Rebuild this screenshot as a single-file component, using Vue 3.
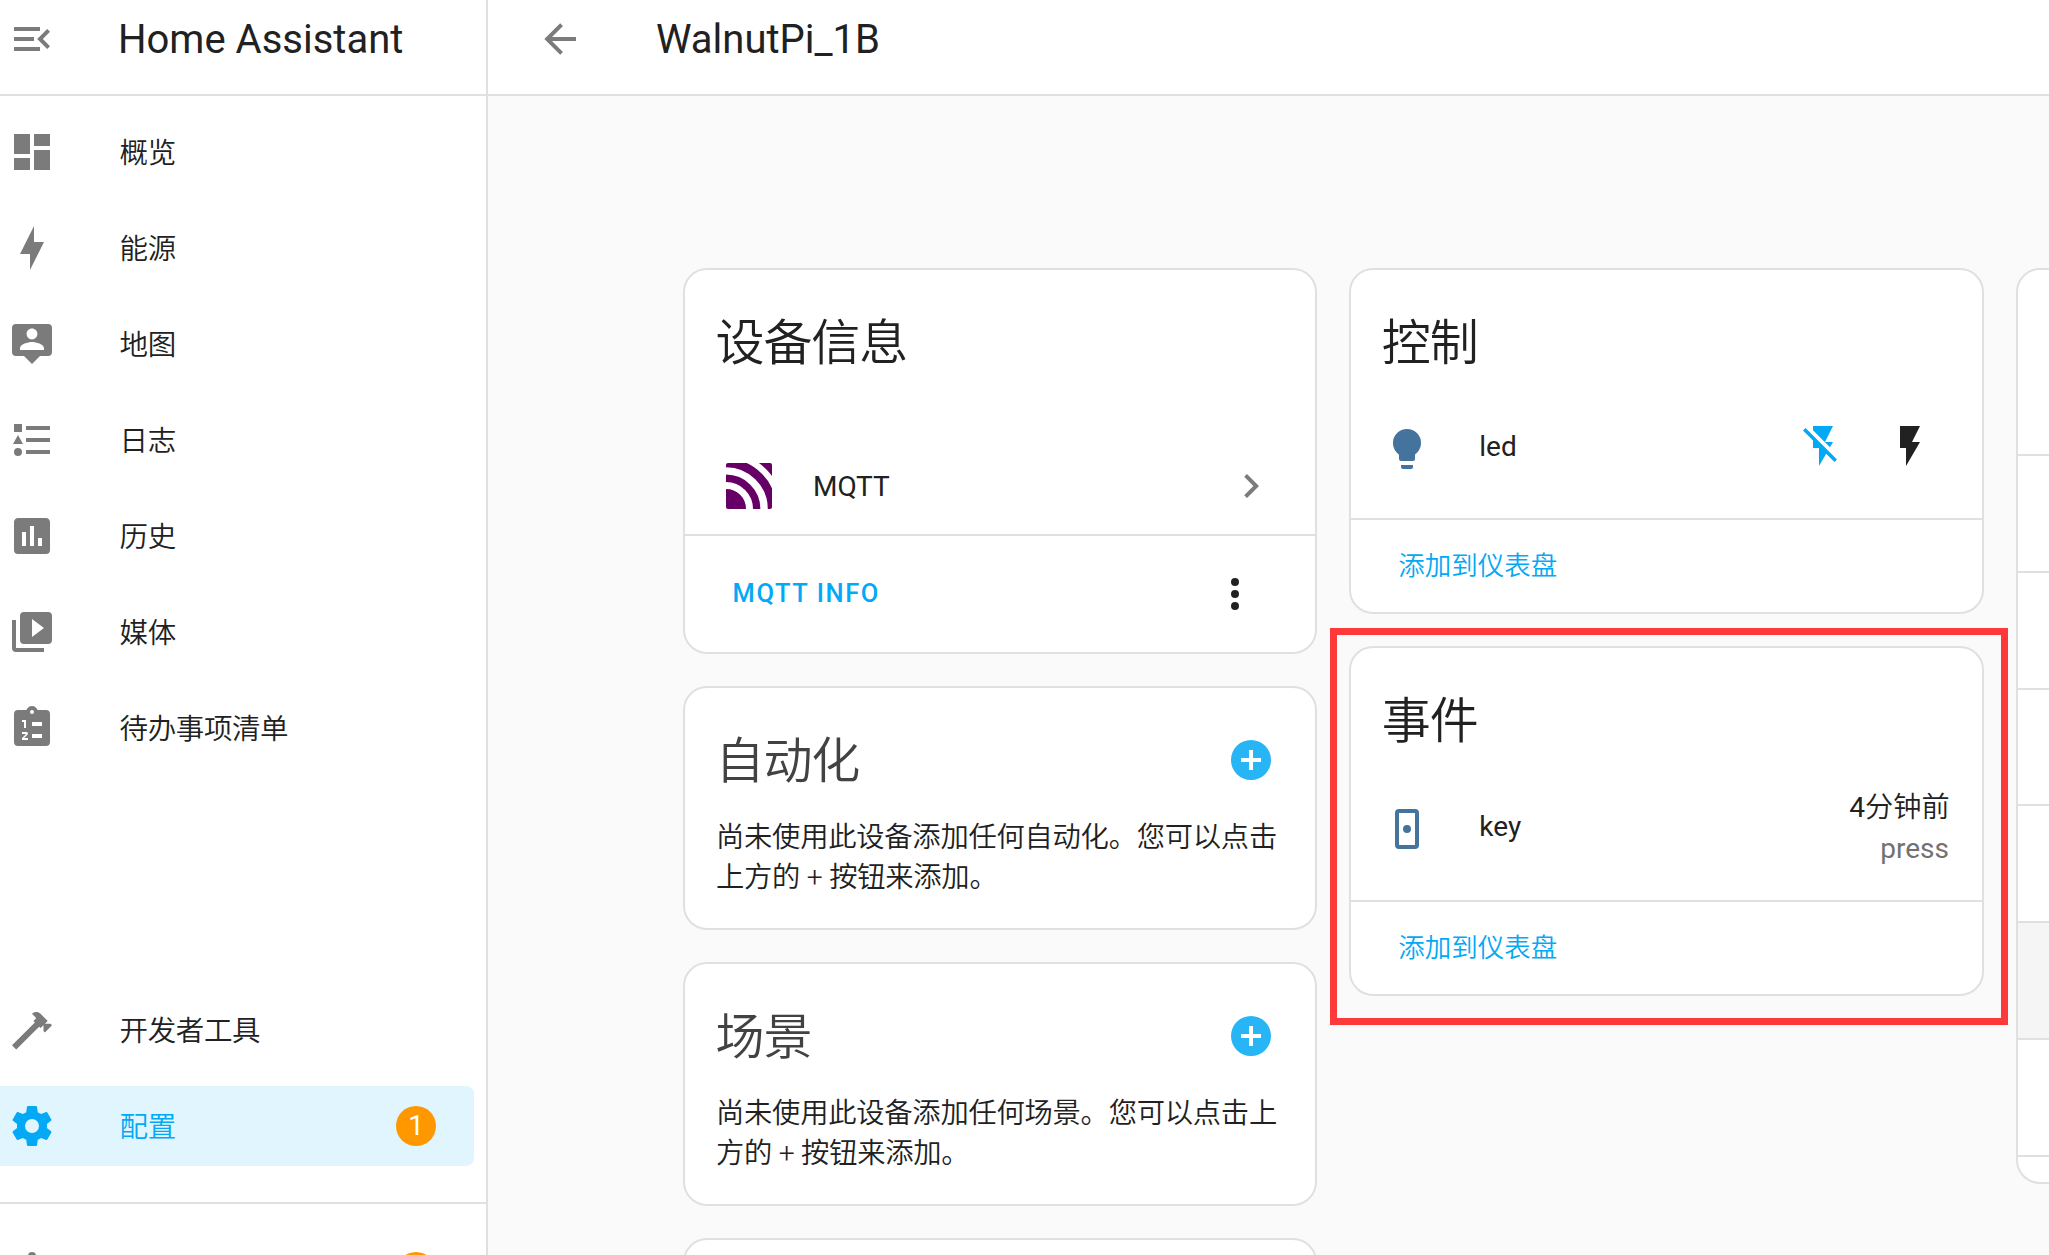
<script setup>
const icons = {
  menuOpen: 'M21,15.61L19.59,17L14.58,12L19.59,7L21,8.39L17.44,12L21,15.61M3,6H16V8H3V6M3,13V11H13V13H3M3,18V16H16V18H3Z',
  dashboard: 'M13,3V9H21V3M13,21H21V11H13M3,21H11V15H3M3,13H11V3H3V13Z',
  bolt: 'M11 15H6L13 1V9H18L11 23V15Z',
  map: 'M20,2H4A2,2 0 0,0 2,4V16A2,2 0 0,0 4,18H8L12,22L16,18H20A2,2 0 0,0 22,16V4A2,2 0 0,0 20,2M12,4.3C13.5,4.3 14.7,5.5 14.7,7C14.7,8.5 13.5,9.7 12,9.7C10.5,9.7 9.3,8.5 9.3,7C9.3,5.5 10.5,4.3 12,4.3M18,15H6V14.1C6,12.1 10,11 12,11C14,11 18,12.1 18,14.1V15Z',
  logbook: 'M5,9.5L7.5,14H2.5L5,9.5M3,4H7V8H3V4M5,20A2,2 0 0,0 7,18A2,2 0 0,0 5,16A2,2 0 0,0 3,18A2,2 0 0,0 5,20M9,5V7H21V5H9M9,19H21V17H9V19M9,13H21V11H9V13Z',
  history: 'M17,17H15V13H17M13,17H11V7H13M9,17H7V10H9M19,3H5C3.89,3 3,3.89 3,5V19A2,2 0 0,0 5,21H19A2,2 0 0,0 21,19V5C21,3.89 20.1,3 19,3Z',
  media: 'M4,6H2V20A2,2 0 0,0 4,22H18V20H4V6M20,2H8A2,2 0 0,0 6,4V16A2,2 0 0,0 8,18H20A2,2 0 0,0 22,16V4A2,2 0 0,0 20,2M12,14.5V5.5L18,10L12,14.5Z',
  todo: 'M19,3H14.82C14.4,1.84 13.3,1 12,1C10.7,1 9.6,1.84 9.18,3H5A2,2 0 0,0 3,5V19A2,2 0 0,0 5,21H19A2,2 0 0,0 21,19V5A2,2 0 0,0 19,3M12,3A1,1 0 0,1 13,4A1,1 0 0,1 12,5A1,1 0 0,1 11,4A1,1 0 0,1 12,3M7,8H9V12H8V9H7V8M10,17V18H7V17.08L9,15H7V14H9.25A0.75,0.75 0 0,1 10,14.75C10,14.95 9.92,15.14 9.79,15.27L8.12,17H10M17,17H12V15H17V17M17,11H12V9H17V11Z',
  hammer: 'M2,19.63L13.43,8.2L12.72,7.5L14.14,6.07L12,3.89C13.2,2.7 15.09,2.7 16.27,3.89L19.87,7.5L18.45,8.91H21.29L22,9.62L18.45,13.21L17.74,12.5V9.62L16.27,11.04L15.56,10.33L4.13,21.76L2,19.63Z',
  cog: 'M12,15.5A3.5,3.5 0 0,1 8.5,12A3.5,3.5 0 0,1 12,8.5A3.5,3.5 0 0,1 15.5,12A3.5,3.5 0 0,1 12,15.5M19.43,12.97C19.47,12.65 19.5,12.33 19.5,12C19.5,11.67 19.47,11.34 19.43,11L21.54,9.37C21.73,9.22 21.78,8.95 21.66,8.73L19.66,5.27C19.54,5.05 19.27,4.96 19.05,5.05L16.56,6.05C16.04,5.66 15.5,5.32 14.87,5.07L14.5,2.42C14.46,2.18 14.25,2 14,2H10C9.75,2 9.54,2.18 9.5,2.42L9.13,5.07C8.5,5.32 7.96,5.66 7.44,6.05L4.95,5.05C4.73,4.96 4.46,5.05 4.34,5.27L2.34,8.73C2.21,8.95 2.27,9.22 2.46,9.37L4.57,11C4.53,11.34 4.5,11.67 4.5,12C4.5,12.33 4.53,12.65 4.57,12.97L2.46,14.63C2.27,14.78 2.21,15.05 2.34,15.27L4.34,18.73C4.46,18.95 4.73,19.03 4.95,18.95L7.44,17.94C7.96,18.34 8.5,18.68 9.13,18.93L9.5,21.58C9.54,21.82 9.75,22 10,22H14C14.25,22 14.46,21.82 14.5,21.58L14.87,18.93C15.5,18.67 16.04,18.34 16.56,17.94L19.05,18.95C19.27,19.03 19.54,18.95 19.66,18.73L21.66,15.27C21.78,15.05 21.73,14.78 21.54,14.63L19.43,12.97Z',
  bell: 'M21,19V20H3V19L5,17V11C5,7.9 7.03,5.17 10,4.29V4A2,2 0 0,1 12,2A2,2 0 0,1 14,4V4.29C16.97,5.17 19,7.9 19,11V17L21,19M14,21A2,2 0 0,1 12,23A2,2 0 0,1 10,21',
  arrow: 'M20,11V13H8L13.5,18.5L12.08,19.92L4.16,12L12.08,4.08L13.5,5.5L8,11H20Z',
  chevron: 'M8.59,16.58L13.17,12L8.59,7.41L10,6L16,12L10,18L8.59,16.58Z',
  dots: 'M12,16A2,2 0 0,1 14,18A2,2 0 0,1 12,20A2,2 0 0,1 10,18A2,2 0 0,1 12,16M12,10A2,2 0 0,1 14,12A2,2 0 0,1 12,14A2,2 0 0,1 10,12A2,2 0 0,1 12,10M12,4A2,2 0 0,1 14,6A2,2 0 0,1 12,8A2,2 0 0,1 10,6A2,2 0 0,1 12,4Z',
  plus: 'M17,13H13V17H11V13H7V11H11V7H13V11H17M12,2A10,10 0 0,0 2,12A10,10 0 0,0 12,22A10,10 0 0,0 22,12A10,10 0 0,0 12,2Z',
  bulb: 'M12,2A7,7 0 0,0 5,9C5,11.38 6.19,13.47 8,14.74V17A1,1 0 0,0 9,18H15A1,1 0 0,0 16,17V14.74C17.81,13.47 19,11.38 19,9A7,7 0 0,0 12,2M9,21A1,1 0 0,0 10,22H14A1,1 0 0,0 15,21V20H9V21Z',
  flashOff: 'M17,10H13L17,2H7V4.18L15.46,12.64M3.27,3L2,4.27L7,9.27V13H10V22L13.58,15.86L17.73,20L19,18.73L3.27,3Z',
  flash: 'M7,2V13H10V22L17,10H13L17,2H7Z',
  button: 'M16,2H8A2,2 0 0,0 6,4V20A2,2 0 0,0 8,22H16A2,2 0 0,0 18,20V4A2,2 0 0,0 16,2M16,20H8V4H16V20M12,10A2,2 0 0,0 10,12A2,2 0 0,0 12,14A2,2 0 0,0 14,12A2,2 0 0,0 12,10Z',
}
const nav = [
  ['dashboard', '概览'],
  ['bolt', '能源'],
  ['map', '地图'],
  ['logbook', '日志'],
  ['history', '历史'],
  ['media', '媒体'],
  ['todo', '待办事项清单'],
]
const hints = [
  { title: '自动化', text: '尚未使用此设备添加任何自动化。您可以点击上方的 + 按钮来添加。' },
  { title: '场景', text: '尚未使用此设备添加任何场景。您可以点击上方的 + 按钮来添加。' },
]
</script>

<template>
  <div class="app">
    <aside class="sidebar">
      <div class="brand">
        <svg class="icon" viewBox="0 0 24 24"><path :d="icons.menuOpen" /></svg>
        <span class="title">Home Assistant</span>
      </div>
      <nav class="nav">
        <a v-for="[icon, label] in nav" :key="icon" class="item">
          <svg class="icon" viewBox="0 0 24 24"><path :d="icons[icon]" /></svg>
          <span class="label">{{ label }}</span>
        </a>
        <div class="spacer"></div>
        <a class="item">
          <svg class="icon" viewBox="0 0 24 24"><path :d="icons.hammer" /></svg>
          <span class="label">开发者工具</span>
        </a>
        <a class="item active">
          <svg class="icon" viewBox="0 0 24 24"><path :d="icons.cog" /></svg>
          <span class="label">配置</span>
          <b class="badge">1</b>
        </a>
      </nav>
      <div class="notice">
        <a class="item">
          <svg class="icon" viewBox="0 0 24 24"><path :d="icons.bell" /></svg>
          <b class="badge"></b>
        </a>
      </div>
    </aside>

    <main class="main">
      <header class="toolbar">
        <svg class="icon" viewBox="0 0 24 24"><path :d="icons.arrow" /></svg>
        <span class="title">WalnutPi_1B</span>
      </header>

      <div class="columns">
        <div class="column">
          <section class="card">
            <h1>设备信息</h1>
            <div class="integration">
              <svg class="mqtt" viewBox="0 0 46 46">
                <defs><clipPath id="logo"><rect width="46" height="46" rx="2" /></clipPath></defs>
                <g clip-path="url(#logo)">
                  <rect width="46" height="46" fill="#660066" />
                  <g fill="none" stroke="#fff">
                    <circle cx="0" cy="46" r="23.5" stroke-width="7" />
                    <circle cx="0" cy="46" r="38.1" stroke-width="7.4" />
                    <circle cx="0" cy="46" r="53.4" stroke-width="6.2" />
                  </g>
                </g>
              </svg>
              <span class="grow latin">MQTT</span>
              <svg class="icon" viewBox="0 0 24 24"><path :d="icons.chevron" /></svg>
            </div>
            <footer class="tall">
              <span class="action caps">MQTT INFO</span>
              <svg class="icon dark" viewBox="0 0 24 24"><path :d="icons.dots" /></svg>
            </footer>
          </section>

          <section v-for="h in hints" :key="h.title" class="card">
            <div class="hint-head">
              <h1>{{ h.title }}</h1>
              <svg class="icon add" viewBox="0 0 24 24"><path :d="icons.plus" /></svg>
            </div>
            <p>{{ h.text }}</p>
          </section>
          <section class="card stub"></section>
        </div>

        <div class="column">
          <section class="card">
            <h1>控制</h1>
            <div class="entity">
              <svg class="icon state" viewBox="0 0 24 24"><path :d="icons.bulb" /></svg>
              <span class="grow latin name">led</span>
              <svg class="icon off" viewBox="0 0 24 24"><path :d="icons.flashOff" /></svg>
              <svg class="icon on" viewBox="0 0 24 24"><path :d="icons.flash" /></svg>
            </div>
            <footer><span class="action">添加到仪表盘</span></footer>
          </section>

          <section class="card marked">
            <h1>事件</h1>
            <div class="entity event">
              <svg class="icon state" viewBox="0 0 24 24"><path :d="icons.button" /></svg>
              <span class="grow latin name">key</span>
              <div class="value">
                <div class="ago"><span class="latin">4</span>分钟前</div>
                <div class="latin muted">press</div>
              </div>
            </div>
            <footer><span class="action">添加到仪表盘</span></footer>
            <div class="frame"></div>
          </section>
        </div>

        <div class="column">
          <section class="card log">
            <div class="log-head"></div>
            <div v-for="n in 6" :key="n" class="log-row" :class="{ shaded: n === 5 }"></div>
          </section>
        </div>
      </div>
    </main>
  </div>
</template>

<style>
body {
  overflow: hidden;
}
</style>

<style scoped>
.app {
  display: flex;
  width: 2049px;
  height: 1255px;
  overflow: hidden;
  background: #fafafa;
  color: #212121;
  font-family: Roboto, "Noto Sans CJK SC", sans-serif;
  font-size: 28px;
  font-weight: 350;
}
.icon {
  width: 48px;
  height: 48px;
  flex: none;
  fill: #7b7b7b;
  display: block;
}
.latin {
  font-weight: 400;
}
.title {
  font-size: 40px;
  font-weight: 400;
  line-height: 48px;
  white-space: nowrap;
}
.sidebar {
  box-sizing: border-box;
  width: 488px;
  flex: none;
  display: flex;
  flex-direction: column;
  background: #fff;
  border-right: 2px solid #e0e0e0;
}
.brand {
  box-sizing: border-box;
  height: 96px;
  flex: none;
  display: flex;
  align-items: flex-start;
  gap: 62px;
  padding: 15px 0 0 8px;
  border-bottom: 2px solid #e0e0e0;
}
.brand .title {
  margin-top: 1px;
}
.nav {
  box-sizing: border-box;
  height: 1106px;
  flex: none;
  display: flex;
  flex-direction: column;
  gap: 16px;
  padding: 16px 12px 36px 0;
}
.item {
  box-sizing: border-box;
  height: 80px;
  flex: none;
  display: flex;
  align-items: center;
  gap: 63px;
  padding: 0 38px 0 8px;
  border-radius: 0 8px 8px 0;
}
.label {
  font-size: 28.5px;
  letter-spacing: -0.4px;
  padding: 0 0 4px 0.6px;
}
.spacer {
  flex: 1;
}
.active {
  background: #e0f5fe;
  color: #03a9f4;
}
.active .icon {
  fill: #03a9f4;
}
.badge {
  width: 40px;
  height: 40px;
  margin-left: auto;
  border-radius: 50%;
  background: #ff9800;
  color: #fff;
  font-weight: 400;
  line-height: 40px;
  text-align: center;
}
.notice {
  flex: 1;
  border-top: 2px solid #e0e0e0;
  padding: 28px 12px 0 0;
}
.main {
  flex: 1;
  min-width: 0;
  display: flex;
  flex-direction: column;
}
.toolbar {
  box-sizing: border-box;
  height: 96px;
  flex: none;
  display: flex;
  align-items: flex-start;
  gap: 72px;
  padding: 15px 0 0 48px;
  background: #fff;
  border-bottom: 2px solid #e0e0e0;
}
.toolbar .title {
  margin-top: 1px;
}
.columns {
  display: flex;
  align-items: flex-start;
  gap: 32px;
  padding: 172px 0 0 195px;
}
.column {
  width: 634.3px;
  flex: none;
  display: flex;
  flex-direction: column;
  gap: 32px;
}
.card {
  box-sizing: border-box;
  background: #fff;
  border: 2px solid #e0e0e0;
  border-radius: 24px;
  position: relative;
}
h1 {
  box-sizing: border-box;
  height: 120px;
  margin: 0;
  padding: 26px 30.5px 0;
  font-size: 49px;
  font-weight: 350;
  letter-spacing: -1.1px;
  line-height: 96px;
}
.integration {
  height: 96px;
  display: flex;
  align-items: center;
  padding: 48px 40px 0 41px;
}
.mqtt {
  width: 46px;
  height: 46px;
  margin-right: 41px;
}
.grow {
  flex: 1;
}
footer {
  box-sizing: border-box;
  height: 94px;
  display: flex;
  align-items: center;
  justify-content: space-between;
  padding: 0 56px 0 47px;
  border-top: 2px solid #e0e0e0;
}
.tall {
  height: 118px;
}
.action {
  color: #03a9f4;
  font-size: 26.5px;
  padding-bottom: 5px;
}
.caps {
  font-weight: 500;
  font-size: 25.5px;
  letter-spacing: 1.55px;
  padding: 0 0 2px 0.6px;
}
.dark {
  fill: #212121;
}
.hint-head {
  height: 128px;
  display: flex;
  align-items: flex-start;
  justify-content: space-between;
  padding-right: 40px;
}
.hint-head h1 {
  color: #424242;
}
.add {
  margin-top: 48px;
  fill: #28b5f5;
}
p {
  margin: 0;
  padding: 2px 29px 30px 31px;
  font-size: 28.3px;
  letter-spacing: -0.25px;
  line-height: 40px;
}
.stub {
  height: 200px;
}
.entity {
  height: 128px;
  display: flex;
  align-items: flex-start;
  padding: 35px 48px 0 32px;
  box-sizing: border-box;
}
.state {
  fill: #44739e;
}
.entity .name {
  padding: 1px 0 0 48px;
  line-height: 42px;
}
.off {
  margin: -3px 39px 0 0;
  fill: #03a9f4;
}
.on {
  margin-top: -3px;
  fill: #212121;
}
.event {
  height: 132px;
  padding: 37px 32px 0 32px;
}
.value {
  margin-top: -19px;
  text-align: right;
  line-height: 41px;
}
.ago {
  font-size: 28.2px;
  padding-top: 0.5px;
}
.muted {
  color: #727272;
  padding-right: 0.6px;
}
.frame {
  position: absolute;
  inset: -20px -26px -31px -21px;
  border: 7px solid #fd3939;
}
.log {
  height: 916px;
  overflow: hidden;
}
.log-head {
  height: 184px;
}
.log-row {
  box-sizing: border-box;
  height: 116.8px;
  border-top: 2px solid #e0e0e0;
}
.log-row:last-child {
  border-bottom: 2px solid #e0e0e0;
  height: 118.8px;
}
.shaded {
  background: #f5f5f5;
}
</style>
